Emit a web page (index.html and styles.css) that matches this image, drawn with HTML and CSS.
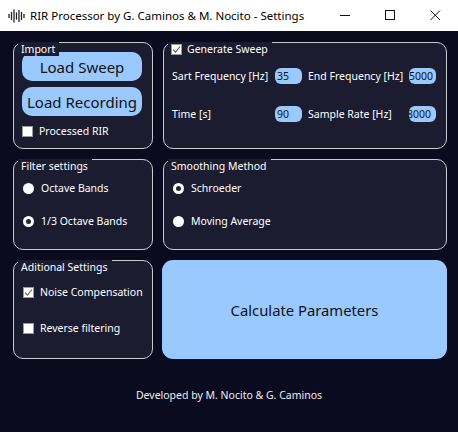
FILE: index.html
```html
<!DOCTYPE html>
<html>
<head>
<meta charset="utf-8">
<link rel="stylesheet" href="styles.css">
</head>
<body>
<div class="window">
  <header class="titlebar">
    <svg class="app-icon" width="18" height="14" viewBox="0 0 18 14">
      <g stroke="#222" stroke-width="1.3" stroke-linecap="round">
        <line x1="1" y1="5.5" x2="1" y2="8.5"/>
        <line x1="3.5" y1="3.5" x2="3.5" y2="10.5"/>
        <line x1="6" y1="1" x2="6" y2="13"/>
        <line x1="8.5" y1="4" x2="8.5" y2="10"/>
        <line x1="11" y1="1.5" x2="11" y2="12.5"/>
        <line x1="13.5" y1="3.5" x2="13.5" y2="10.5"/>
        <line x1="16" y1="5.5" x2="16" y2="8.5"/>
      </g>
    </svg>
    <span class="title">RIR Processor by G. Caminos &amp; M. Nocito - Settings</span>
    <div class="controls">
      <span class="ctl"><svg width="11" height="11" viewBox="0 0 11 11"><line x1="0" y1="5.5" x2="10" y2="5.5" stroke="#111" stroke-width="1"/></svg></span>
      <span class="ctl"><svg width="11" height="11" viewBox="0 0 11 11"><rect x="0.5" y="0.5" width="9" height="9" fill="none" stroke="#111" stroke-width="1"/></svg></span>
      <span class="ctl"><svg width="11" height="11" viewBox="0 0 11 11"><path d="M0.5 0.5 L10 10 M10 0.5 L0.5 10" stroke="#111" stroke-width="1"/></svg></span>
    </div>
  </header>

  <main class="content">
    <section class="box import">
      <div class="box-title">Import</div>
      <button class="btn">Load Sweep</button>
      <button class="btn">Load Recording</button>
      <label class="check"><span class="cb"></span>Processed RIR</label>
    </section>

    <section class="box sweep">
      <div class="box-title"><span class="cb checked"><svg width="9" height="9" viewBox="0 0 9 9"><path d="M1 4.6 L3.5 7.2 L8 1.5" fill="none" stroke="#666" stroke-width="1.2"/></svg></span>Generate Sweep</div>
      <div class="sweep-grid">
        <span class="lbl">Sart Frequency [Hz]</span>
        <span class="field">35</span>
        <span class="lbl lbl2">End Frequency [Hz]</span>
        <span class="field shift1">5000</span>
        <span class="lbl">Time [s]</span>
        <span class="field">90</span>
        <span class="lbl lbl2">Sample Rate [Hz]</span>
        <span class="field shift2">8000</span>
      </div>
    </section>

    <section class="box radios">
      <div class="box-title">Filter settings</div>
      <label class="radio"><span class="rb"></span>Octave Bands</label>
      <label class="radio"><span class="rb on"></span>1/3 Octave Bands</label>
    </section>

    <section class="box radios">
      <div class="box-title">Smoothing Method</div>
      <label class="radio"><span class="rb on"></span>Schroeder</label>
      <label class="radio"><span class="rb"></span>Moving Average</label>
    </section>

    <section class="box extra">
      <div class="box-title">Aditional Settings</div>
      <label class="check"><span class="cb checked"><svg width="9" height="9" viewBox="0 0 9 9"><path d="M1 4.6 L3.5 7.2 L8 1.5" fill="none" stroke="#666" stroke-width="1.2"/></svg></span>Noise Compensation</label>
      <label class="check"><span class="cb"></span>Reverse filtering</label>
    </section>

    <button class="btn calc">Calculate Parameters</button>
  </main>

  <footer class="footer">Developed by M. Nocito &amp; G. Caminos</footer>
</div>
</body>
</html>
```

FILE: styles.css
```css
* { box-sizing: border-box; }
html, body { margin: 0; padding: 0; }
body {
  width: 458px;
  height: 432px;
  overflow: hidden;
  font-family: "Noto Sans", "Open Sans", sans-serif;
  font-size: 10.5px;
  background: #0b0b20;
}
.window {
  width: 458px;
  height: 432px;
  display: flex;
  flex-direction: column;
  background: #0b0b20;
}
.titlebar {
  height: 31px;
  flex: none;
  background: #ffffff;
  display: flex;
  align-items: center;
  padding-left: 8px;
  color: #000;
}
.app-icon { flex: none; margin-right: 4px; }
.title { font-size: 11.5px; white-space: nowrap; }
.controls { margin-left: auto; display: flex; height: 100%; }
.ctl {
  width: 45px;
  height: 100%;
  display: flex;
  align-items: center;
  justify-content: center;
}
.ctl svg { display: block; }

.content {
  display: grid;
  grid-template-columns: 140px 284px;
  grid-template-rows: 107px 91px 99px;
  column-gap: 10px;
  row-gap: 10px;
  padding: 11px 0 0 13px;
}
.box {
  position: relative;
  background: #1c1c30;
  border: 1px solid #c9c9d0;
  border-radius: 10px;
  color: #ffffff;
}
.box-title {
  position: absolute;
  top: -1px;
  left: 4px;
  padding: 0 4px 0 3px;
  height: 14px;
  line-height: 13px;
  background: #1c1c30;
  display: flex;
  align-items: center;
  white-space: nowrap;
}

.btn {
  border: none;
  background: #99c9ff;
  color: #111;
  font-family: inherit;
  border-radius: 10px;
  padding: 0;
}
.import {
  display: flex;
  flex-direction: column;
  padding: 9px 10px 0 8px;
}
.import .btn {
  height: 29px;
  font-size: 15px;
  margin-bottom: 6px;
}
.import .check { margin-top: 1px; }

.check, .radio {
  display: flex;
  align-items: center;
  height: 16px;
  white-space: nowrap;
}
.cb {
  width: 11px;
  height: 11px;
  background: #ffffff;
  border: 1px solid #9a9a9a;
  margin-right: 6px;
  display: inline-flex;
  align-items: center;
  justify-content: center;
  flex: none;
}
.cb svg { display: block; }
.box-title .cb { margin-left: 0; margin-right: 5px; }
.rb {
  width: 11px;
  height: 11px;
  border-radius: 50%;
  background: #ffffff;
  margin-right: 7px;
  flex: none;
  position: relative;
}
.rb.on::after {
  content: "";
  position: absolute;
  left: 3px;
  top: 3px;
  width: 5px;
  height: 5px;
  border-radius: 50%;
  background: #26263a;
}

.sweep-grid {
  display: grid;
  grid-template-columns: 103px 27px 107px 27px;
  grid-template-rows: 16px 16px;
  row-gap: 22px;
  padding: 25px 0 0 8px;
  align-items: center;
}
.lbl { white-space: nowrap; }
.lbl2 { padding-left: 6px; }
.field {
  height: 16px;
  line-height: 16px;
  background: #99c9ff;
  color: #111;
  border-radius: 6px;
  padding-left: 2px;
  overflow: hidden;
  white-space: nowrap;
}
.shift1 { text-indent: -2px; }
.shift2 { text-indent: -4px; }

.radios {
  display: flex;
  flex-direction: column;
  gap: 17px;
  padding: 20px 0 0 9px;
}
.extra {
  display: flex;
  flex-direction: column;
  gap: 20px;
  padding: 23px 0 0 9px;
}
.calc {
  margin-left: -1px;
  width: 285px;
  height: 99px;
  font-size: 14.8px;
  border-radius: 11px;
}
.footer {
  flex: 1;
  display: flex;
  align-items: center;
  justify-content: center;
  color: #ececf4;
  font-size: 10.5px;
  padding-bottom: 1px;
}
```
